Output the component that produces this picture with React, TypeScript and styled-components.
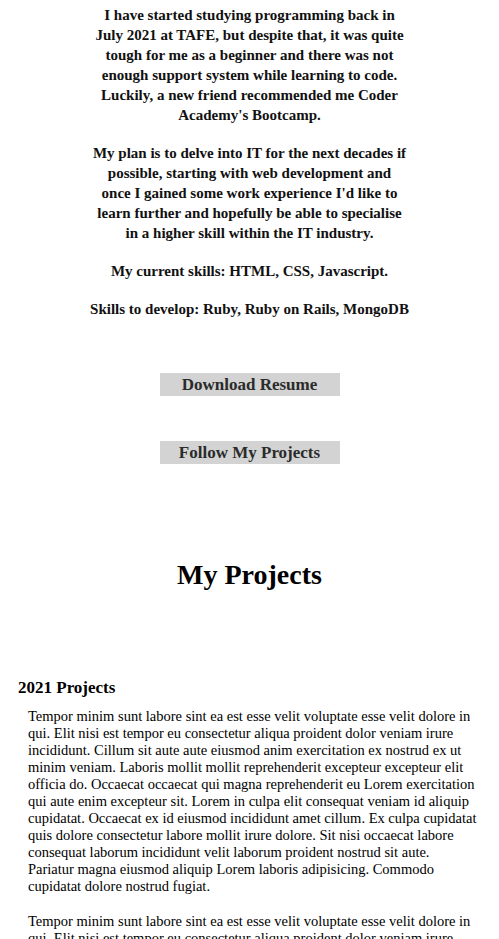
import React from "react";
import styled, { createGlobalStyle } from "styled-components";

const Global = createGlobalStyle`
  html, body { margin: 0; padding: 0; background: #ffffff; }
  body { font-family: "Liberation Serif", "Times New Roman", serif; color: #000; }
  * { box-sizing: border-box; }
`;

const Page = styled.div`
  display: flex;
  flex-direction: column;
  align-items: stretch;
  padding-top: 5px;
`;

const About = styled.section`
  display: flex;
  flex-direction: column;
  align-items: center;
  gap: 18px;
`;

const AboutText = styled.p<{ $wide?: boolean }>`
  margin: 0;
  width: ${(p) => (p.$wide ? "360px" : "315px")};
  text-align: center;
  font-family: "Liberation Serif", serif;
  font-weight: 700;
  font-size: 15px;
  line-height: 20px;
  color: #111;
`;

const Actions = styled.div`
  display: flex;
  flex-direction: column;
  align-items: center;
  gap: 45px;
  margin-top: 54px;
`;

const ActionButton = styled.a`
  display: flex;
  align-items: center;
  justify-content: center;
  width: 180px;
  height: 23px;
  background: #d3d3d3;
  color: #2b2b2b;
  font-family: "Liberation Serif", serif;
  font-weight: 700;
  font-size: 17px;
  text-decoration: none;
`;

const ProjectsTitle = styled.h1`
  margin: 95px 0 0;
  text-align: center;
  font-family: "Liberation Serif", serif;
  font-weight: 700;
  font-size: 28px;
  line-height: 32px;
  color: #000;
`;

const Projects = styled.section`
  display: flex;
  flex-direction: column;
  padding: 0 21px 0 18px;
  margin-top: 86px;
`;

const YearTitle = styled.h2`
  margin: 0;
  font-family: "Liberation Serif", serif;
  font-weight: 700;
  font-size: 17px;
  line-height: 22px;
  color: #000;
`;

const ProjectText = styled.p`
  margin: 9px 0 18px 10px;
  font-family: "Liberation Serif", serif;
  font-weight: 400;
  font-size: 14.5px;
  line-height: 17px;
  color: #000;
  & + & { margin-top: 0; }
`;

const lorem =
  "Tempor minim sunt labore sint ea est esse velit voluptate esse velit dolore in qui. Elit nisi est tempor eu consectetur aliqua proident dolor veniam irure incididunt. Cillum sit aute aute eiusmod anim exercitation ex nostrud ex ut minim veniam. Laboris mollit mollit reprehenderit excepteur excepteur elit officia do. Occaecat occaecat qui magna reprehenderit eu Lorem exercitation qui aute enim excepteur sit. Lorem in culpa elit consequat veniam id aliquip cupidatat. Occaecat ex id eiusmod incididunt amet cillum. Ex culpa cupidatat quis dolore consectetur labore mollit irure dolore. Sit nisi occaecat labore consequat laborum incididunt velit laborum proident nostrud sit aute. Pariatur magna eiusmod aliquip Lorem laboris adipisicing. Commodo cupidatat dolore nostrud fugiat.";

export default function App() {
  return (
    <>
      <Global />
      <Page>
        <About>
          <AboutText>
            I have started studying programming back in July 2021 at TAFE, but despite that, it was quite
            tough for me as a beginner and there was not enough support system while learning to code.
            Luckily, a new friend recommended me Coder Academy's Bootcamp.
          </AboutText>
          <AboutText>
            My plan is to delve into IT for the next decades if possible, starting with web development and
            once I gained some work experience I'd like to learn further and hopefully be able to specialise
            in a higher skill within the IT industry.
          </AboutText>
          <AboutText $wide>My current skills: HTML, CSS, Javascript.</AboutText>
          <AboutText $wide>Skills to develop: Ruby, Ruby on Rails, MongoDB</AboutText>
        </About>
        <Actions>
          <ActionButton href="#">Download Resume</ActionButton>
          <ActionButton href="#">Follow My Projects</ActionButton>
        </Actions>
        <ProjectsTitle>My Projects</ProjectsTitle>
        <Projects>
          <YearTitle>2021 Projects</YearTitle>
          <ProjectText>{lorem}</ProjectText>
          <ProjectText>{lorem}</ProjectText>
        </Projects>
      </Page>
    </>
  );
}
